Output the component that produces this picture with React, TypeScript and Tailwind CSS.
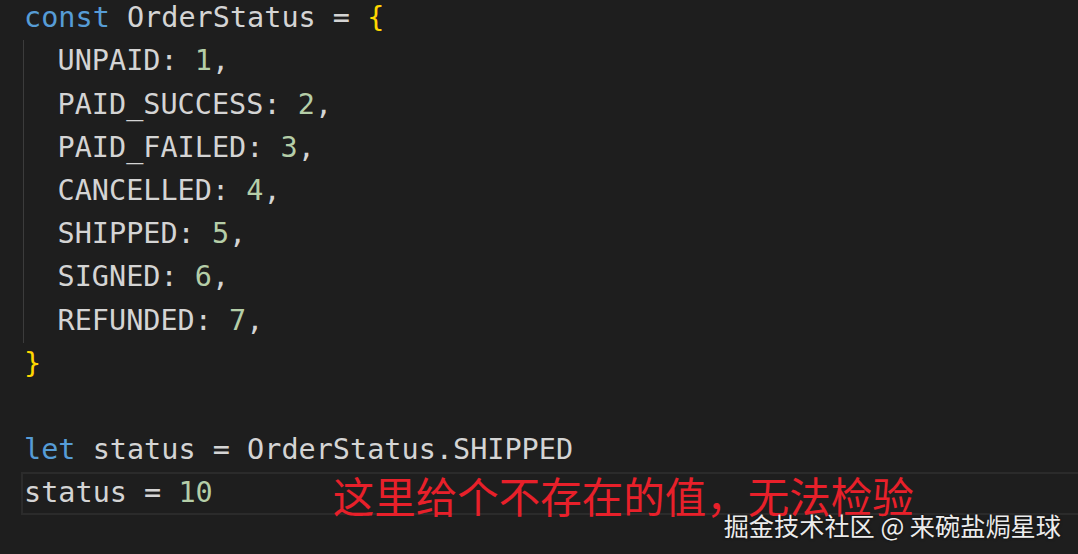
import React from "react";

const mono = { fontFamily: '"DejaVu Sans Mono", "Liberation Mono", monospace' };

function Line({ children, className = "" }: { children?: React.ReactNode; className?: string }) {
  return <div className={`h-[43.2px] flex items-center whitespace-pre ${className}`}>{children}</div>;
}

const K = ({ children }: { children: React.ReactNode }) => <span className="text-[#569cd6]">{children}</span>;
const N = ({ children }: { children: React.ReactNode }) => <span className="text-[#b5cea8]">{children}</span>;
const B = ({ children }: { children: React.ReactNode }) => <span className="text-[#ffd700]">{children}</span>;

export default function App() {
  const entries: [string, string][] = [
    ["UNPAID", "1"],
    ["PAID_SUCCESS", "2"],
    ["PAID_FAILED", "3"],
    ["CANCELLED", "4"],
    ["SHIPPED", "5"],
    ["SIGNED", "6"],
    ["REFUNDED", "7"],
  ];
  return (
    <div className="relative w-[1078px] h-[554px] overflow-hidden bg-[#1e1e1e] text-[#d4d4d4]">
      <div className="mt-[-3px] text-[28.5px]" style={mono}>
        <Line className="pl-[24px]">
          <K>const</K> OrderStatus = <B>{"{"}</B>
        </Line>
        <div className="ml-[23px] border-l-[1.5px] border-[#3c3c3c] pl-[33.5px]">
          {entries.map(([k, v]) => (
            <Line key={k}>
              {k}: <N>{v}</N>,
            </Line>
          ))}
        </div>
        <Line className="pl-[24px]">
          <B>{"}"}</B>
        </Line>
        <Line />
        <Line className="pl-[24px]">
          <K>let</K> status = OrderStatus.SHIPPED
        </Line>
        <div className="ml-[21px] h-[43.2px] border-2 border-r-0 border-[#2b2b2b] pl-[1px] flex items-center whitespace-pre">
          <span>
            status = <N>10</N>
          </span>
          <span
            className="ml-[120px] text-[41.5px] text-[#e8202a] leading-none mt-[4px]"
            style={{ fontFamily: '"Noto Sans CJK SC", sans-serif' }}
          >
            这里给个不存在的值，无法检验
          </span>
        </div>
      </div>
      <div
        className="absolute right-[17px] bottom-[16px] text-[25.2px] leading-none text-[#ececec] [text-shadow:0_0_3px_rgba(0,0,0,0.6)]"
        style={{ fontFamily: '"Noto Sans CJK SC", sans-serif' }}
      >
        掘金技术社区 @ 来碗盐焗星球
      </div>
    </div>
  );
}
